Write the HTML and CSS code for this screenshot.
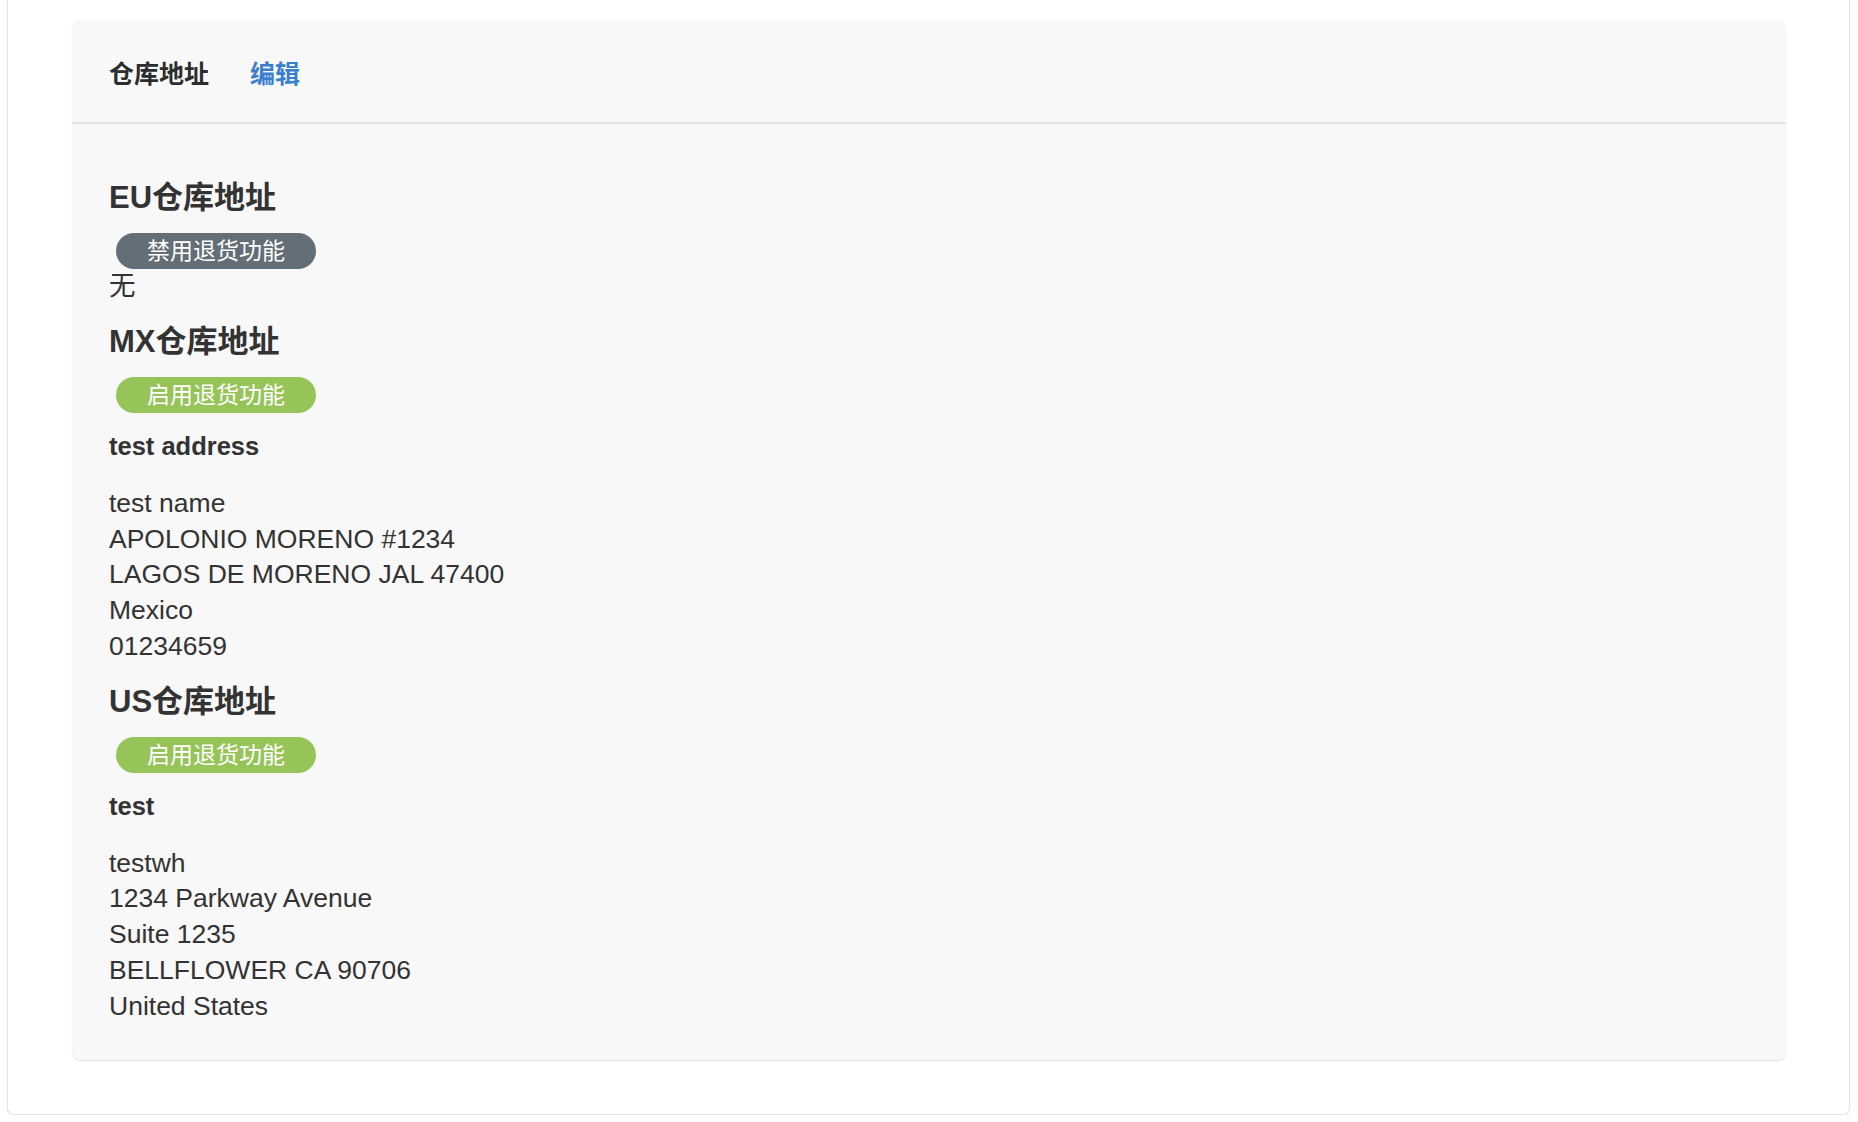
FILE: index.html
```html
<!DOCTYPE html>
<html lang="zh-CN">
<head>
<meta charset="utf-8">
<title>仓库地址</title>
<link rel="stylesheet" href="styles.css">
</head>
<body>
<div class="outer">
  <div class="card">
    <div class="card-header">
      <span class="title">仓库地址</span>
      <a class="edit" href="#">编辑</a>
    </div>
    <div class="card-body">
      <section class="wh">
        <h4 class="wh-title">EU仓库地址</h4>
        <div class="badge-row"><span class="badge badge-gray">禁用退货功能</span></div>
        <div class="line">无</div>
      </section>
      <section class="wh">
        <h4 class="wh-title">MX仓库地址</h4>
        <div class="badge-row"><span class="badge badge-green">启用退货功能</span></div>
        <div class="addr-name">test address</div>
        <address class="addr">test name<br>APOLONIO MORENO #1234<br>LAGOS DE MORENO JAL 47400<br>Mexico<br>01234659</address>
      </section>
      <section class="wh">
        <h4 class="wh-title">US仓库地址</h4>
        <div class="badge-row"><span class="badge badge-green">启用退货功能</span></div>
        <div class="addr-name">test</div>
        <address class="addr">testwh<br>1234 Parkway Avenue<br>Suite 1235<br>BELLFLOWER CA 90706<br>United States</address>
      </section>
    </div>
  </div>
</div>
</body>
</html>
```
FILE: styles.css
```css
html, body {
  margin: 0;
  padding: 0;
  background: #ffffff;
}
body {
  font-family: "Liberation Sans", "Noto Sans CJK SC", sans-serif;
  color: #333333;
  font-size: 26.5px;
  line-height: 35.8px;
}
.outer {
  margin: 0 8px 0 7px;
  padding: 20px 63px 54px 64px;
  background: #ffffff;
  border: 1px solid #e4e4e6;
  border-top: none;
  border-radius: 0 0 7px 7px;
  box-shadow: 0 1px 2px rgba(0, 0, 0, 0.06);
}
.card {
  background: #f8f8f8;
  border-radius: 8px;
  box-shadow: 0 1px 1px rgba(0, 0, 0, 0.12);
}
.card-header {
  height: 95px;
  padding: 7px 37px 0;
  display: flex;
  align-items: center;
  border-bottom: 2px solid #e1e2e7;
}
.title {
  font-weight: bold;
  color: #2b2d2e;
  font-size: 25px;
}
.edit {
  margin-left: 41px;
  font-weight: bold;
  color: #3a7fcd;
  font-size: 25px;
  text-decoration: none;
}
.card-body {
  padding: 37px 37px 35px;
}
.wh-title {
  margin: 20px 0 19px;
  font-size: 31px;
  line-height: 33px;
  font-weight: bold;
  color: #333333;
}
.badge-row {
  height: 36px;
  display: flex;
}
.badge {
  margin-left: 7px;
  width: 170px;
  height: 36px;
  padding: 0 15px;
  border-radius: 18px;
  color: #ffffff;
  font-size: 23px;
  line-height: 36px;
  text-align: center;
}
.badge-gray {
  background: #636e76;
}
.badge-green {
  background: #97c459;
}
.line {
  height: 36px;
}
.addr-name {
  margin-top: 16px;
  margin-bottom: 21px;
  font-weight: bold;
  font-size: 25.5px;
}
.addr {
  font-style: normal;
  margin: 0;
}
```
